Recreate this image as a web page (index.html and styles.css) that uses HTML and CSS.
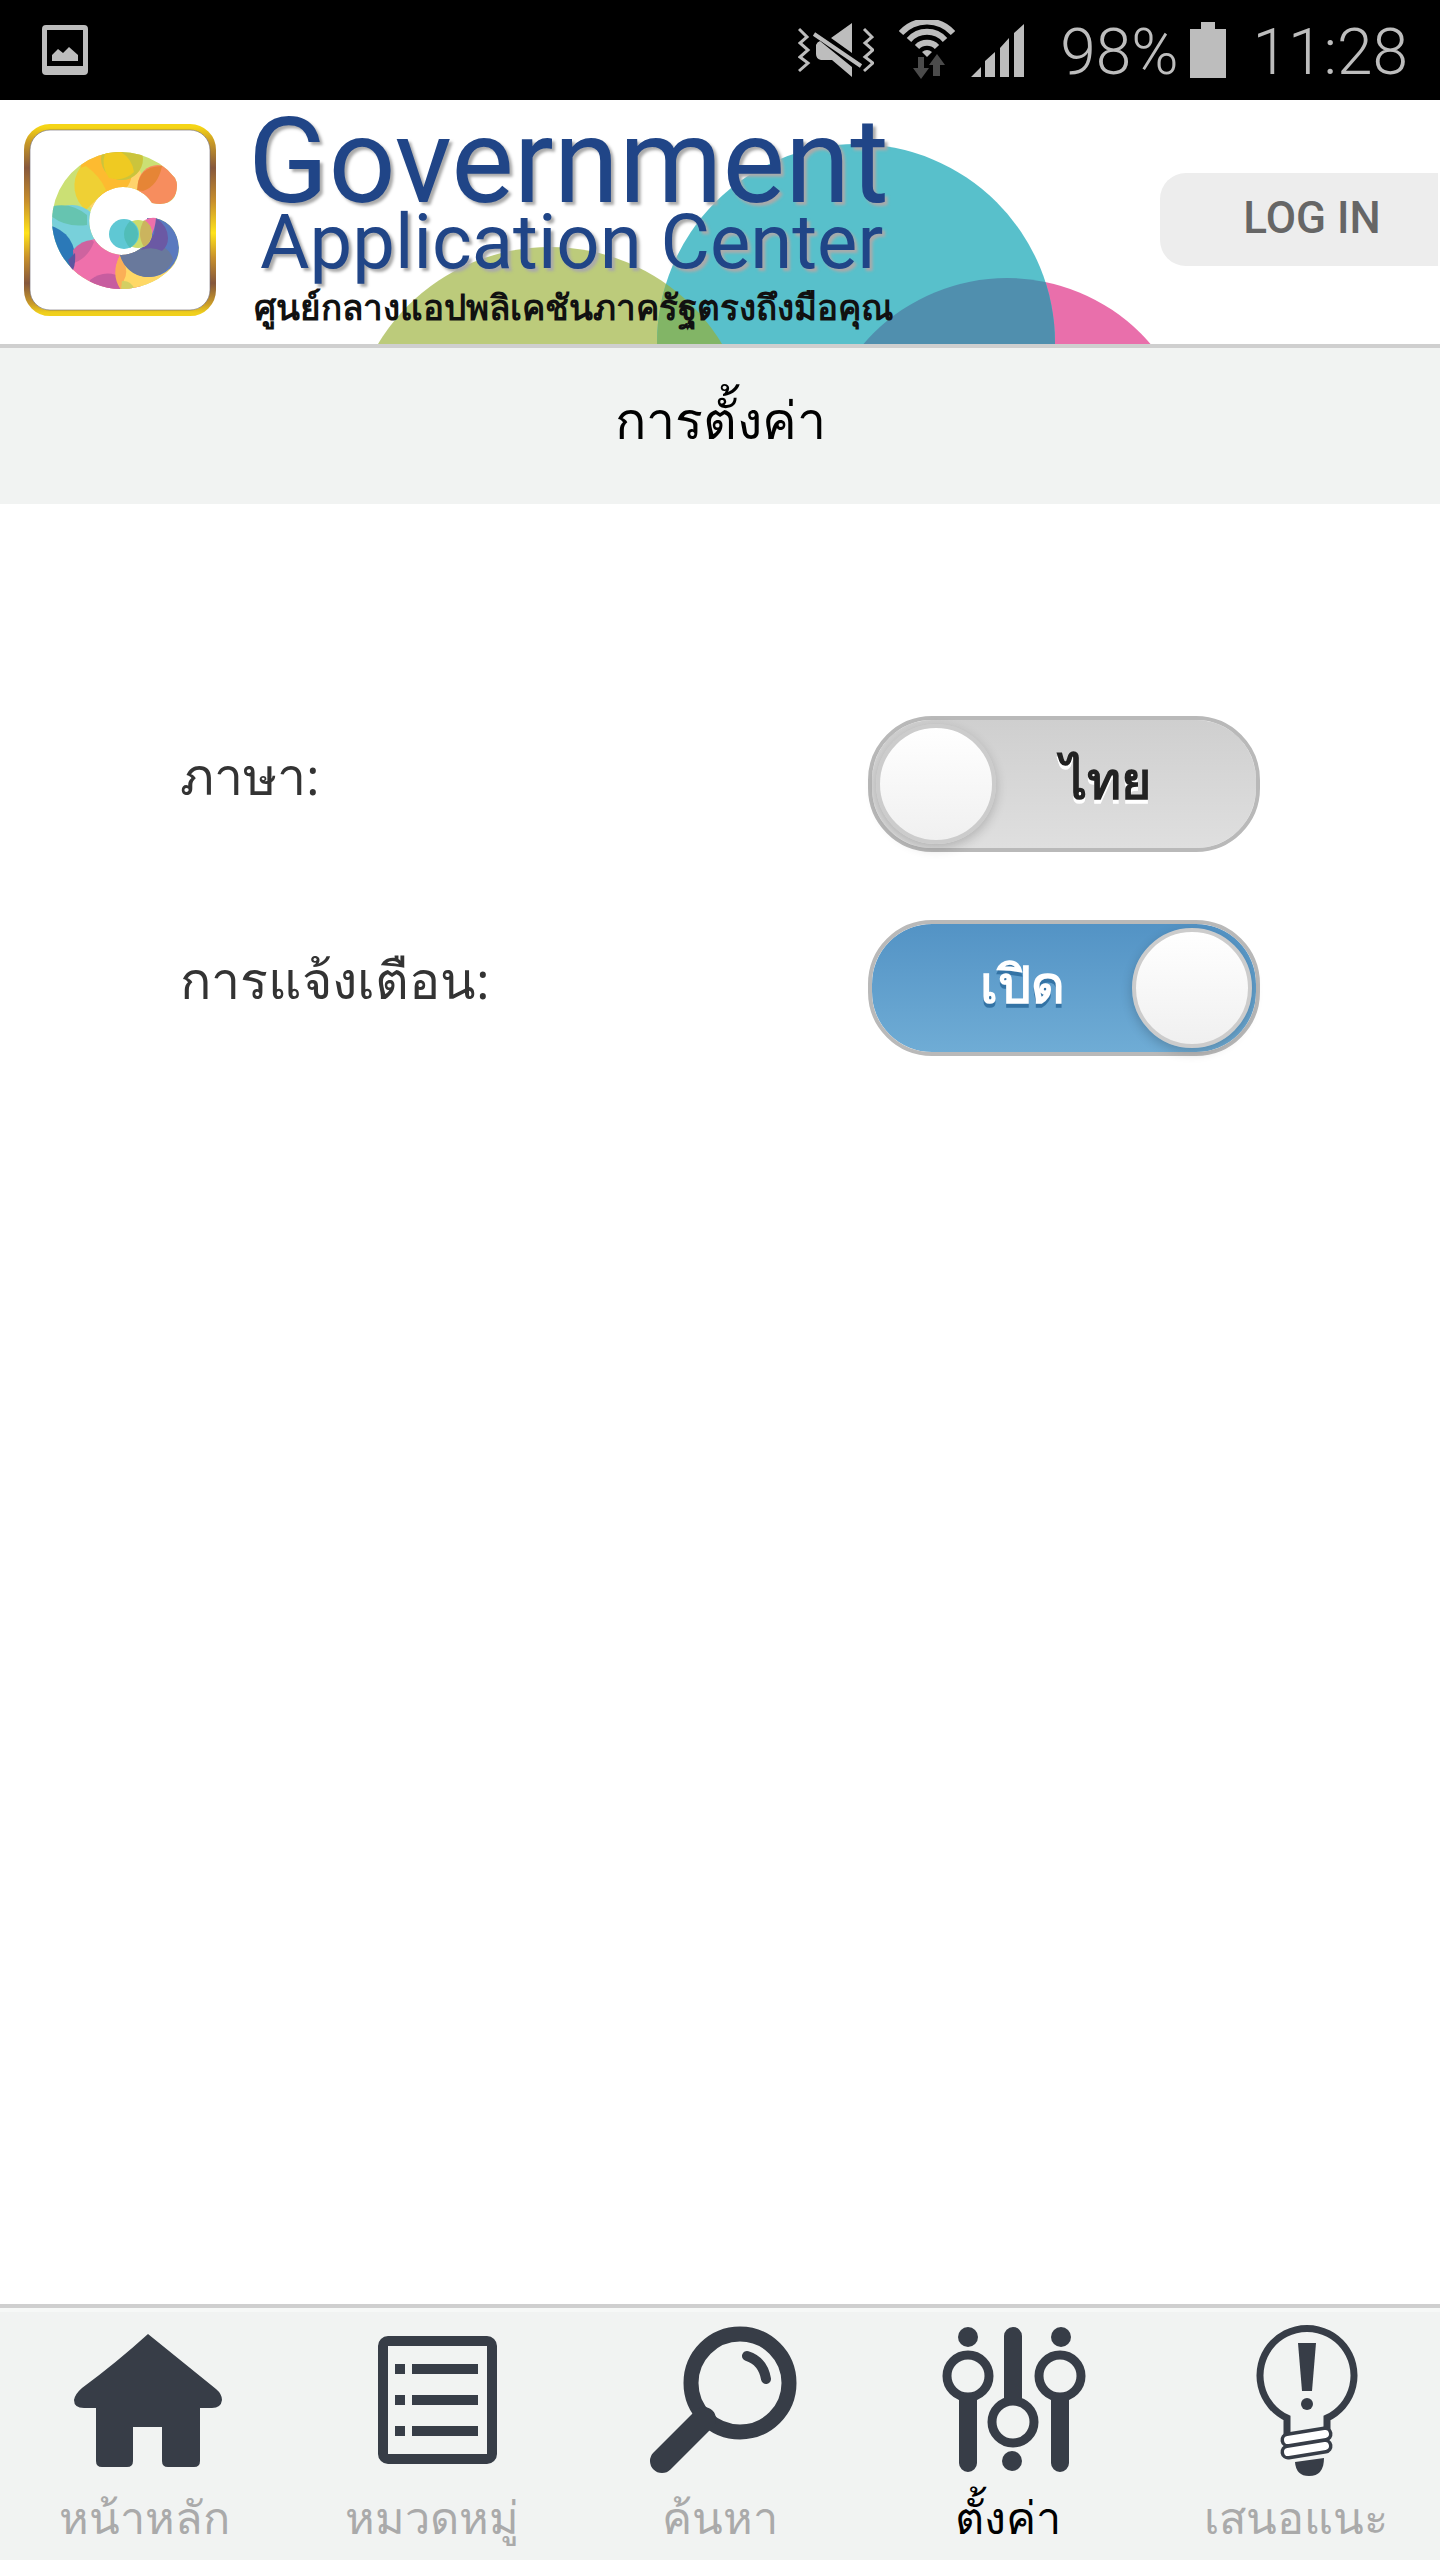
FILE: index.html
```html
<!DOCTYPE html>
<html lang="th">
<head>
    <meta charset="UTF-8"/>
    <meta name="viewport" content="width=device-width, initial-scale=1"/>
    <title>Government Application Center</title>
    <link rel="stylesheet" href="styles.css">
</head>
<body>
<div class="status-bar">
    <svg class="status-shot" width="46" height="50" viewBox="0 0 46 50">
        <path fill="#bdbdbd" fill-rule="evenodd" d="M4 0H42Q46 0 46 4V46Q46 50 42 50H4Q0 50 0 46V4Q0 0 4 0ZM5 5V41H41V5ZM10 36V30L16 24L21 28L27 22L36 30V36Z"/>
    </svg>
    <svg class="status-mute" width="76" height="54" viewBox="0 0 76 54">
        <g fill="none" stroke="#bdbdbd" stroke-width="3">
            <path d="M1 6L9 14L2 20L10 27L2 34L10 40L1 48"/>
            <path d="M66 6L74 14L67 20L75 27L67 34L75 40L66 48"/>
        </g>
        <path fill="#bdbdbd" d="M33 15L54 0V30ZM18 22Q19 19 22 18L54 44V54L34 37H23Q18 36 18 31Z"/>
        <path stroke="#000" stroke-width="3" d="M18 8L66 42"/>
        <path stroke="#bdbdbd" stroke-width="4" d="M16 11L63 43"/>
    </svg>
    <svg class="status-wifi" width="56" height="60" viewBox="0 0 56 60">
        <g fill="none" stroke="#bdbdbd" stroke-width="6">
            <path d="M2 13A35 35 0 0 1 54 13"/>
            <path d="M10 20A24 24 0 0 1 46 20"/>
            <path d="M18 27A14 14 0 0 1 38 27"/>
        </g>
        <path fill="#bdbdbd" d="M23 32Q28 28 33 32L28 37Z"/>
        <path fill="#4b4b4b" d="M19 37H25V48H30L22 59L14 48H19ZM34 56V45H30L38 34L46 45H41V56Z"/>
    </svg>
    <svg class="status-signal" width="53" height="54" viewBox="0 0 53 54">
        <path fill="#bdbdbd" d="M0 54L10 44V54ZM14 54V38L24 29V54ZM29 54V25L38 15V54ZM43 54V10L53 1V54Z"/>
    </svg>
    <span class="status-text">98%</span>
    <svg class="status-battery" width="36" height="56" viewBox="0 0 36 56">
        <path fill="#bdbdbd" d="M11 0H25V7H36V56H0V7H11Z"/>
    </svg>
    <span class="status-text">11:28</span>
</div>

<header class="header">
    <svg class="logo" width="192" height="192" viewBox="0 0 192 192">
        <defs>
            <linearGradient id="gold" x1="0" y1="0" x2="0" y2="1">
                <stop offset="0" stop-color="#f5d516"/>
                <stop offset=".08" stop-color="#c99a26"/>
                <stop offset=".22" stop-color="#87583c"/>
                <stop offset=".4" stop-color="#c88f2b"/>
                <stop offset=".57" stop-color="#ffe31a"/>
                <stop offset=".7" stop-color="#c9912b"/>
                <stop offset=".84" stop-color="#85573c"/>
                <stop offset=".95" stop-color="#c99a28"/>
                <stop offset="1" stop-color="#f0d01c"/>
            </linearGradient>
            <clipPath id="g-shape">
                <path d="M151 54A69 69 0 0 0 28 97A69 69 0 0 0 97 165C115 165 132 158 143 148Q155 138 155 124Q153 99 131 94H123L128 110A34 34 0 0 1 97 131A34 34 0 1 1 128 79Q153 84 153 61Q153 58 151 54Z"/>
            </clipPath>
        </defs>
        <rect x="3" y="3" width="186" height="186" rx="23" fill="#fff" stroke="url(#gold)" stroke-width="6"/>
        <rect x="6" y="6" width="180" height="180" rx="20" fill="none" stroke="#6b6670" stroke-opacity=".6"/>
        <g clip-path="url(#g-shape)">
            <rect width="192" height="192" fill="#cbe074"/>
            <circle cx="89" cy="62" r="31" fill="#ffd36c"/>
            <circle cx="82" cy="48" r="26" fill="#fdbb30"/>
            <circle cx="98" cy="35" r="21" fill="#cbc43c"/>
            <path d="M81 29A28 28 0 0 0 85 54Q100 58 110 48A28 28 0 0 0 97 28Z" fill="#efca22"/>
            <path d="M56 44A31 31 0 0 0 62 86L82 66Q76 52 62 42Z" fill="#efd034"/>
            <circle cx="48" cy="109" r="28" fill="#78d0da"/>
            <path d="M20 85Q44 75 63 91V101Q42 104 27 92Z" fill="#66c4b0"/>
            <circle cx="19" cy="133" r="32" fill="#2b79b8"/>
            <circle cx="82" cy="150" r="37" fill="#ef70ab"/>
            <path d="M49 126Q58 116 68 116L70 118Q64 134 50 139Z" fill="#ce639f"/>
            <path d="M48 148Q52 141 51 129L44 136Z" fill="#5c55a0"/>
            <path d="M66 156Q81 144 100 154V166H66Z" fill="#c75d9f"/>
            <circle cx="122" cy="147" r="30" fill="#ffd866"/>
            <path d="M96 131Q106 146 100 156L97 166Q86 150 96 131Z" fill="#fbaf57"/>
            <path d="M98 157Q107 156 111 166H97Z" fill="#d4cf62"/>
            <circle cx="125" cy="123" r="30" fill="#5a7abf"/>
            <path d="M96 131Q118 116 138 122Q148 128 149 136Q140 154 121 153Q102 150 96 131Z" fill="#69799c"/>
            <path d="M132 94Q144 102 144 114Q144 122 138 127Q128 122 117 126L130 110Z" fill="#6b59a4"/>
            <circle cx="134" cy="61" r="20" fill="#f78d5e"/>
            <path d="M113 66Q114 42 138 42Q134 62 119 67Z" fill="#e68536"/>
        </g>
        <path d="M121 96Q126 93 132 94Q131 106 126 114Z" fill="#ef70ab"/>
        <circle cx="114" cy="110" r="14" fill="#cbdc6c"/>
        <path d="M120 96Q128 100 128 110Q127 119 120 123Q112 110 120 96Z" fill="#cbb45e"/>
        <circle cx="100" cy="110" r="15" fill="#5fc8d4"/>
        <path d="M106 97Q114 102 114 110Q114 118 106 124Q94 110 106 97Z" fill="#51bdb8"/>
    </svg>

    <div class="brand">
        <svg class="brand-art" width="920" height="244" viewBox="240 0 920 244">
            <defs>
                <clipPath id="cyan-clip"><circle cx="856" cy="243" r="199"/></clipPath>
            </defs>
            <circle cx="550" cy="348" r="201" fill="#bccb7b"/>
            <circle cx="1007" cy="367" r="189" fill="#e96fab"/>
            <circle cx="856" cy="243" r="199" fill="#58c0cb"/>
            <g clip-path="url(#cyan-clip)">
                <circle cx="550" cy="348" r="201" fill="#82b566"/>
                <circle cx="1007" cy="367" r="189" fill="#508fae"/>
            </g>
        </svg>
        <h1 class="brand-text">
            <span class="brand-main">Government</span>
            <span class="brand-sub">Application Center</span>
            <span class="brand-thai">ศูนย์กลางแอปพลิเคชันภาครัฐตรงถึงมือคุณ</span>
        </h1>
    </div>

    <button class="login" type="button">LOG IN</button>
</header>

<h2 class="page-title">การตั้งค่า</h2>

<main class="settings">
    <div class="row">
        <label for="language">ภาษา:</label>
        <div class="switch">
            <input id="language" type="checkbox"/>
            <span class="switch-text">ไทย</span>
            <span class="knob"></span>
        </div>
    </div>
    <div class="row">
        <label for="notify">การแจ้งเตือน:</label>
        <div class="switch">
            <input id="notify" type="checkbox" checked/>
            <span class="switch-text">เปิด</span>
            <span class="knob"></span>
        </div>
    </div>
</main>

<nav class="tabs">
    <a class="tab" href="#home">
        <svg width="200" height="160" viewBox="0 0 200 160" fill="#373d47">
            <path d="M104 14L172 69Q178 74 178 80Q177 88 168 88H156V141Q156 147 150 147H124Q118 147 118 141V107H89V141Q89 147 83 147H58Q52 147 52 141V88H40Q30 88 30 80Q31 74 38 68Q72 43 104 14Z"/>
        </svg>
        <span>หน้าหลัก</span>
    </a>
    <a class="tab" href="#categories">
        <svg width="200" height="160" viewBox="0 0 200 160" fill="#373d47">
            <rect x="51" y="21" width="109" height="118" rx="5" fill="none" stroke="#373d47" stroke-width="10"/>
            <path d="M63 44H73V54H63ZM63 75H73V85H63ZM63 106H73V116H63ZM80 44H146V54H80ZM80 75H146V85H80ZM80 106H146V116H80Z"/>
        </svg>
        <span>หมวดหมู่</span>
    </a>
    <a class="tab" href="#search">
        <svg width="200" height="160" viewBox="0 0 200 160" fill="none" stroke="#373d47" stroke-linecap="round">
            <circle cx="120" cy="63" r="49" stroke-width="15"/>
            <path d="M84 99L42 141" stroke-width="24"/>
            <path d="M127 36Q143 41 146 59" stroke-width="10"/>
        </svg>
        <span>ค้นหา</span>
    </a>
    <a class="tab active" href="#settings">
        <svg width="200" height="160" viewBox="0 0 200 160" fill="#373d47">
            <circle cx="60" cy="17" r="10"/>
            <circle cx="153" cy="17" r="10"/>
            <circle cx="104" cy="141" r="10"/>
            <g fill="none" stroke="#373d47" stroke-width="9">
                <circle cx="60" cy="56" r="21"/>
                <circle cx="152" cy="56" r="21"/>
                <circle cx="105" cy="102" r="21"/>
            </g>
            <path d="M51 79H69V143A9 9 0 0 1 51 143ZM143 79H161V143A9 9 0 0 1 143 143ZM96 80V16A9 9 0 0 1 114 16V80Z"/>
        </svg>
        <span>ตั้งค่า</span>
    </a>
    <a class="tab" href="#suggest">
        <svg width="200" height="160" viewBox="0 0 200 160" fill="#373d47">
            <path d="M91 120V98A47 47 0 1 1 131 98V115" fill="none" stroke="#373d47" stroke-width="7"/>
            <path d="M102 23H120L116 71H106Z"/>
            <circle cx="111" cy="84" r="6"/>
            <g fill="none" stroke-linecap="round">
                <path d="M92 120L129 114M92 132L129 126" stroke="#373d47" stroke-width="15"/>
                <path d="M92 120L129 114M92 132L129 126" stroke="#fff" stroke-width="8"/>
            </g>
            <path d="M99 142L128 138Q128 156 113 156Q100 156 99 142Z"/>
        </svg>
        <span>เสนอแนะ</span>
    </a>
</nav>
</body>
</html>
```
FILE: styles.css
```css
* {
    box-sizing: border-box;
}

body {
    margin: 0;
    min-height: 100vh;
    display: flex;
    flex-direction: column;
    background-color: white;
    color: #333;
    font-family: "Open Sans", "Noto Sans", sans-serif;
}

svg {
    display: block;
    flex-shrink: 0;
}

/* phone status bar */
.status-bar {
    display: flex;
    align-items: center;
    height: 100px;
    padding: 0 32px 0 42px;
    background-color: #000;
    color: #bdbdbd;
}

.status-shot {
    margin-right: auto;
}

.status-wifi {
    margin-left: 25px;
}

.status-signal {
    margin: 0 36px 0 16px;
}

.status-text {
    padding-top: 6px;
    font-family: Roboto, sans-serif;
    font-size: 64px;
    font-weight: 300;
    line-height: 76px;
}

.status-battery {
    margin: 0 27px 0 11px;
}

/* banner */
.header {
    display: flex;
    height: 248px;
    padding-left: 24px;
    border-bottom: 4px solid #cfcfcf;
}

.logo {
    margin-top: 24px;
}

.brand {
    flex: 1;
    min-width: 0;
    display: grid;
    margin-left: 24px;
}

.brand-art,
.brand-text {
    grid-area: 1 / 1;
}

.brand-text {
    margin: 0;
    padding: 6px 0 0 8px;
    display: flex;
    flex-direction: column;
    font-family: Roboto, sans-serif;
    color: #204587;
    white-space: nowrap;
    text-shadow: 3px 3px 3px #aaa;
}

.brand-main {
    font-size: 118px;
    font-weight: 400;
    line-height: 112px;
}

.brand-sub {
    padding-left: 12px;
    font-size: 76px;
    font-weight: 400;
    line-height: 48px;
}

.brand-thai {
    padding-left: 6px;
    font-family: "Open Sans", "Noto Sans", sans-serif;
    font-size: 35px;
    font-weight: bold;
    line-height: 82px;
    color: #111;
    text-shadow: none;
}

.login {
    flex-shrink: 0;
    width: 278px;
    height: 93px;
    margin: 73px 2px 0 0;
    padding: 0 0 4px 26px;
    border: none;
    border-radius: 26px 0 0 26px;
    background-color: #ededed;
    color: #666;
    font-family: Roboto, sans-serif;
    font-size: 44px;
    font-weight: 500;
}

.page-title {
    margin: 0;
    height: 156px;
    background-color: #f1f3f2;
    color: #000;
    font-size: 52px;
    font-weight: normal;
    line-height: 142px;
    text-align: center;
}

/* settings rows */
.settings {
    flex: 1;
    display: flex;
    flex-direction: column;
    gap: 68px;
    padding: 212px 180px;
}

.row {
    display: flex;
    justify-content: space-between;
    font-size: 52px;
    line-height: 118px;
}

.switch {
    position: relative;
    display: grid;
    width: 392px;
    height: 136px;
}

.switch input {
    grid-area: 1 / 1;
    appearance: none;
    width: 100%;
    height: 100%;
    margin: 0;
    border: 4px solid #b9b9b9;
    border-radius: 64px;
    background: linear-gradient(#cfcfcf, #dfdfdf) padding-box;
    cursor: pointer;
}

.switch input:checked {
    background: linear-gradient(#5393c5, #6facd5) padding-box;
}

.switch-text {
    grid-area: 1 / 1;
    padding-left: 84px;
    color: #222;
    font-weight: bold;
    line-height: 126px;
    text-align: center;
    text-shadow: 0 4px 0 #fff;
    pointer-events: none;
}

.switch input:checked + .switch-text {
    padding: 0 84px 0 0;
    color: #fff;
    text-shadow: 0 4px 0 #3373a5;
}

.knob {
    position: absolute;
    top: 8px;
    left: 8px;
    width: 120px;
    height: 120px;
    border: 4px solid #ccc;
    border-radius: 50%;
    background: linear-gradient(#fff, #f0f0f0);
    box-shadow: 0 4px 12px rgba(0, 0, 0, 0.2);
    pointer-events: none;
}

.switch input:checked ~ .knob {
    left: auto;
    right: 8px;
}

/* bottom tabs */
.tabs {
    display: grid;
    grid-template-columns: repeat(5, 1fr);
    height: 256px;
    border-top: 4px solid #cfcfcf;
    background-color: #f1f3f2;
    box-shadow: inset 0 4px 0 #f6f8f7;
}

.tab {
    display: flex;
    flex-direction: column;
    align-items: center;
    padding-top: 12px;
    color: #aaa;
    font-size: 45px;
    line-height: 74px;
    text-decoration: none;
}

.tab.active {
    color: #000;
}
```
